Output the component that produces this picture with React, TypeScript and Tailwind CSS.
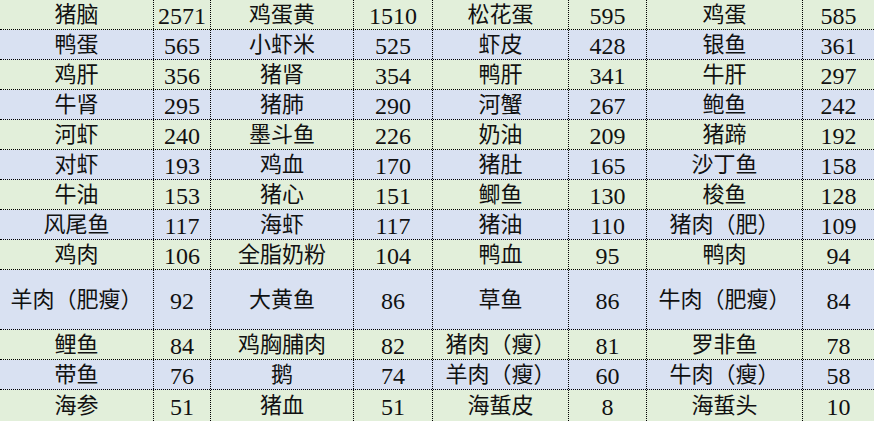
const rows: [string, string, string, string, string, string, string, string][] = [
  ["猪脑", "2571", "鸡蛋黄", "1510", "松花蛋", "595", "鸡蛋", "585"],
  ["鸭蛋", "565", "小虾米", "525", "虾皮", "428", "银鱼", "361"],
  ["鸡肝", "356", "猪肾", "354", "鸭肝", "341", "牛肝", "297"],
  ["牛肾", "295", "猪肺", "290", "河蟹", "267", "鲍鱼", "242"],
  ["河虾", "240", "墨斗鱼", "226", "奶油", "209", "猪蹄", "192"],
  ["对虾", "193", "鸡血", "170", "猪肚", "165", "沙丁鱼", "158"],
  ["牛油", "153", "猪心", "151", "鲫鱼", "130", "梭鱼", "128"],
  ["风尾鱼", "117", "海虾", "117", "猪油", "110", "猪肉（肥）", "109"],
  ["鸡肉", "106", "全脂奶粉", "104", "鸭血", "95", "鸭肉", "94"],
  ["羊肉（肥瘦）", "92", "大黄鱼", "86", "草鱼", "86", "牛肉（肥瘦）", "84"],
  ["鲤鱼", "84", "鸡胸脯肉", "82", "猪肉（瘦）", "81", "罗非鱼", "78"],
  ["带鱼", "76", "鹅", "74", "羊肉（瘦）", "60", "牛肉（瘦）", "58"],
  ["海参", "51", "猪血", "51", "海蜇皮", "8", "海蜇头", "10"],
]

const heights = [
  "h-[30px]", "h-[30px]", "h-[30px]", "h-[30px]", "h-[30px]", "h-[30px]", "h-[30px]",
  "h-[30px]", "h-[30px]", "h-[60px]", "h-[30px]", "h-[30px]", "h-[31px]",
]

export default function App() {
  return (
    <div className="w-[874px] h-[421px] overflow-hidden bg-white text-[22px] leading-none text-[#111] font-['Liberation_Serif','Noto_Sans_CJK_SC',serif]">
      {rows.map((row, i) => (
        <div
          key={i}
          className={`grid grid-cols-[154px_57px_143px_79px_136px_78px_156px_71px] ${heights[i]} ${
            i % 2 === 0 ? "bg-[#e2efda]" : "bg-[#d9e1f2]"
          } ${i < rows.length - 1 ? "border-b border-dotted border-black" : ""}`}
        >
          {row.map((cell, j) => (
            <div
              key={j}
              className={`flex items-center justify-center whitespace-nowrap ${
                j % 2 === 1 ? "text-[24px] pt-[2px]" : ""
              } ${j < 7 ? "border-r border-dotted border-black" : ""}`}
            >
              {cell}
            </div>
          ))}
        </div>
      ))}
    </div>
  )
}
